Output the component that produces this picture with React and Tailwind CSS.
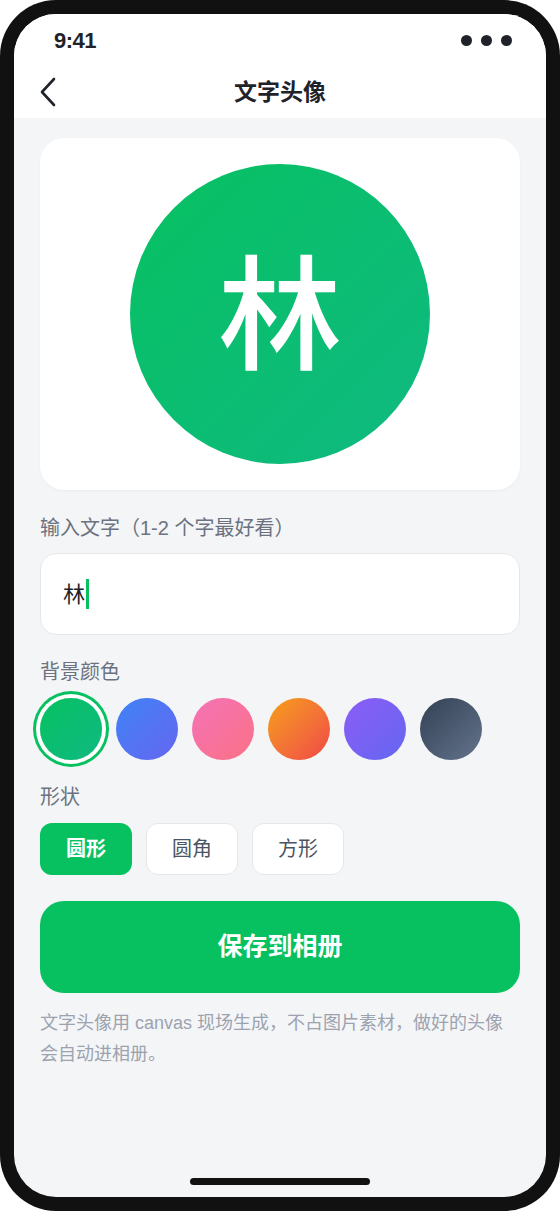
import { useState } from 'react';

const swatches = [
    'bg-gradient-to-br from-[#07c160] to-[#10b981]',
    'bg-gradient-to-br from-[#3b82f6] to-[#6366f1]',
    'bg-gradient-to-br from-[#f472b6] to-[#fb7185]',
    'bg-gradient-to-br from-[#f59e0b] to-[#ef4444]',
    'bg-gradient-to-br from-[#8b5cf6] to-[#6366f1]',
    'bg-gradient-to-br from-[#334155] to-[#64748b]',
];

const shapes = ['圆形', '圆角', '方形'];

const font = { fontFamily: '"Liberation Sans", "Noto Sans CJK SC", sans-serif' };

const App = () => {
    const [color, setColor] = useState(0);
    const [shape, setShape] = useState(0);

    return (
        <div className="w-[560px] h-[1211px] bg-white" style={font}>
            <div className="w-full h-full bg-[#111111] rounded-[56px] p-[14px]">
                <div className="w-full h-full bg-[#f4f5f7] rounded-[42px] overflow-hidden flex flex-col">
                    {/* Status bar */}
                    <div className="bg-white h-[52px] shrink-0 flex items-center justify-between pl-[40px] pr-[34px]">
                        <span className="text-[22px] font-bold text-[#1f2329] tracking-tight">9:41</span>
                        <div className="flex gap-[9px]">
                            <span className="w-[11px] h-[11px] rounded-full bg-[#1f2329]" />
                            <span className="w-[11px] h-[11px] rounded-full bg-[#1f2329]" />
                            <span className="w-[11px] h-[11px] rounded-full bg-[#1f2329]" />
                        </div>
                    </div>

                    {/* Nav bar */}
                    <div className="bg-white h-[52px] shrink-0 relative flex items-center justify-center">
                        <button className="absolute left-[22px] top-[10px] w-[24px] h-[32px] flex items-center justify-center">
                            <svg width="18" height="30" viewBox="0 0 18 30" fill="none">
                                <path d="M15 2 L3 15 L15 28" stroke="#1f2329" strokeWidth="2.6" strokeLinecap="round" strokeLinejoin="round" />
                            </svg>
                        </button>
                        <h1 className="text-[23px] font-bold text-[#1f2329]">文字头像</h1>
                    </div>

                    {/* Content */}
                    <div className="flex-1 px-[26px] pt-[20px] flex flex-col">
                        <div className="bg-white rounded-[24px] h-[352px] flex items-center justify-center shadow-[0_1px_3px_rgba(0,0,0,0.04)]">
                            <div className={`w-[300px] h-[300px] ${shape === 0 ? 'rounded-full' : shape === 1 ? 'rounded-[48px]' : 'rounded-none'} ${swatches[color]} flex items-center justify-center`}>
                                <span className="text-white text-[124px] font-medium leading-none -translate-y-[8px]" style={{ fontFamily: '"Noto Sans CJK SC", sans-serif' }}>林</span>
                            </div>
                        </div>

                        <div className="mt-[24px] text-[20px] leading-[28px] text-[#6b7280]">输入文字（1-2 个字最好看）</div>
                        <div className="mt-[11px] h-[82px] bg-white rounded-[16px] border border-[#e5e7eb] flex items-center px-[22px]">
                            <span className="text-[22px] text-[#1f2329]">林</span>
                            <span className="w-[3px] h-[30px] bg-[#07c160] ml-[1px]" />
                        </div>

                        <div className="mt-[23px] text-[20px] leading-[28px] text-[#6b7280]">背景颜色</div>
                        <div className="mt-[12px] flex gap-[14px]">
                            {swatches.map((s, i) => (
                                <button
                                    key={i}
                                    onClick={() => setColor(i)}
                                    className={`w-[62px] h-[62px] rounded-full ${s} ${i === color ? 'shadow-[0_0_0_4px_#ffffff,0_0_0_7px_#07c160]' : ''}`}
                                />
                            ))}
                        </div>

                        <div className="mt-[23px] text-[20px] leading-[28px] text-[#6b7280]">形状</div>
                        <div className="mt-[12px] flex gap-[14px]">
                            {shapes.map((s, i) => (
                                <button
                                    key={s}
                                    onClick={() => setShape(i)}
                                    className={`w-[92px] h-[52px] rounded-[12px] text-[20px] ${i === shape ? 'bg-[#07c160] text-white font-bold' : 'bg-white text-[#4b5563] border border-[#e5e7eb]'}`}
                                >
                                    {s}
                                </button>
                            ))}
                        </div>

                        <button className="mt-[26px] h-[92px] rounded-[24px] bg-[#07c160] text-white text-[25px] font-bold">
                            保存到相册
                        </button>

                        <p className="mt-[15px] text-[18px] leading-[31px] text-[#9ca3af]">
                            文字头像用 canvas 现场生成，不占图片素材，做好的头像会自动进相册。
                        </p>

                        <div className="flex-1" />
                        <div className="flex justify-center pb-[12px]">
                            <span className="w-[180px] h-[7px] rounded-full bg-[#111111]" />
                        </div>
                    </div>
                </div>
            </div>
        </div>
    );
};

export default App;
